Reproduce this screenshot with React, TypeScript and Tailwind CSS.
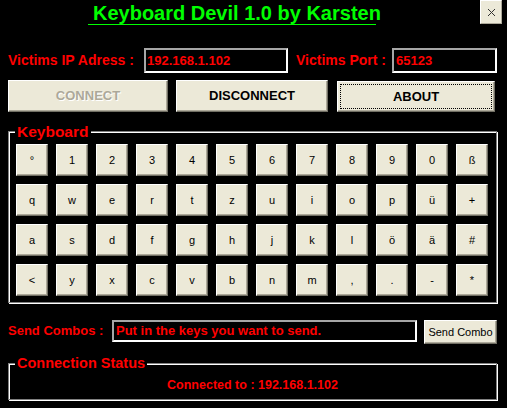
import React from "react";

const keys = [
  "°", "1", "2", "3", "4", "5", "6", "7", "8", "9", "0", "ß",
  "q", "w", "e", "r", "t", "z", "u", "i", "o", "p", "ü", "+",
  "a", "s", "d", "f", "g", "h", "j", "k", "l", "ö", "ä", "#",
  "<", "y", "x", "c", "v", "b", "n", "m", ",", ".", "-", "*",
];

const btn =
  "bg-[#ece9d8] border border-t-white border-l-white border-b-[#716f64] border-r-[#716f64] shadow-[inset_-1px_-1px_0_#aca899] flex items-center justify-center";

const field =
  "bg-black border-2 border-t-[#a6a6a6] border-l-[#a6a6a6] border-b-white border-r-white flex items-center text-[#ff0000] font-bold";

export default function App() {
  return (
    <div
      className="w-[507px] h-[408px] bg-black overflow-hidden flex flex-col"
      style={{ fontFamily: '"Liberation Sans", Arial, sans-serif' }}
    >
      {/* header */}
      <div className="flex h-[48px] items-start">
        <div className="ml-[88px] mt-[3px] w-[288px] border-b border-[#00ff00] pl-[5px] pb-[1px] whitespace-nowrap text-[20px] leading-[20px] font-bold text-[#00ff00]">
          Keyboard Devil 1.0 by Karsten
        </div>
        <div className="ml-[104px] w-[22px] h-[24px] bg-[#ece9d8] border border-t-white border-l-white border-b-[#aca899] border-r-[#aca899] flex items-center justify-center">
          <svg width="9" height="9" viewBox="0 0 9 9">
            <path d="M1 1 L8 8 M8 1 L1 8" stroke="#333" strokeWidth="1" fill="none" />
          </svg>
        </div>
      </div>

      {/* IP / Port row */}
      <div className="flex h-[25px] items-center">
        <div className="ml-[8px] w-[136px] text-[14px] font-bold text-[#ff0000] whitespace-nowrap">
          Victims IP Adress :
        </div>
        <div className={`${field} w-[144px] h-[25px] pl-[1px] text-[13px]`}>192.168.1.102</div>
        <div className="ml-[8px] w-[96px] text-[14px] font-bold text-[#ff0000] whitespace-nowrap">
          Victims Port :
        </div>
        <div className={`${field} w-[105px] h-[25px] pl-[2px] text-[13px]`}>65123</div>
      </div>

      {/* buttons row */}
      <div className="flex mt-[7px] items-start">
        <div className={`${btn} ml-[8px] w-[160px] h-[32px]`}>
          <span className="text-[13px] font-bold text-[#aca899] [text-shadow:1px_1px_0_#ffffff]">CONNECT</span>
        </div>
        <div className={`${btn} ml-[8px] w-[152px] h-[32px]`}>
          <span className="text-[13px] font-bold text-black">DISCONNECT</span>
        </div>
        <div className={`${btn} ml-[9px] mt-[1px] w-[158px] h-[31px] p-[2px]`}>
          <div className="w-full h-full border border-dotted border-black flex items-center justify-center">
            <span className="text-[13px] font-bold text-black">ABOUT</span>
          </div>
        </div>
      </div>

      {/* keyboard frame */}
      <div className="relative mt-[19px] ml-[8px] w-[489px] h-[172px] border border-[#808080] shadow-[inset_1px_1px_0_#ffffff,1px_1px_0_#ffffff] pt-[12px] pl-[7px]">
        <div className="absolute left-[6px] -top-[8px] px-[2px] bg-black text-[15.5px] leading-[16px] font-bold text-[#ff0000]">
          Keyboard
        </div>
        <div className="grid grid-cols-[repeat(12,32px)] auto-rows-[32px] gap-[8px]">
          {keys.map((k, i) => (
            <div key={i} className={`${btn} w-[32px] h-[32px] text-[11px] text-black`}>
              {k}
            </div>
          ))}
        </div>
      </div>

      {/* send combos */}
      <div className="flex mt-[17px] items-start h-[24px]">
        <div className="ml-[8px] w-[104px] h-[22px] flex items-center text-[13px] font-bold text-[#ff0000] whitespace-nowrap">
          Send Combos :
        </div>
        <div className={`${field} w-[305px] h-[22px] pl-[2px] text-[13px] whitespace-nowrap`}>
          Put in the keys you want to send.
        </div>
        <div className={`${btn} ml-[7px] w-[73px] h-[24px] text-[11px] text-black`}>Send Combo</div>
      </div>

      {/* connection status */}
      <div className="relative mt-[19px] ml-[8px] w-[489px] h-[37px] border border-[#808080] shadow-[inset_1px_1px_0_#ffffff,1px_1px_0_#ffffff] flex items-center justify-center">
        <div className="absolute left-[6px] -top-[9px] px-[2px] bg-black text-[14.5px] leading-[16px] font-bold text-[#ff0000] whitespace-nowrap">
          Connection Status
        </div>
        <div className="mt-[8px] text-[12.5px] font-bold text-[#ff0000] whitespace-nowrap">
          Connected to : 192.168.1.102
        </div>
      </div>
    </div>
  );
}
